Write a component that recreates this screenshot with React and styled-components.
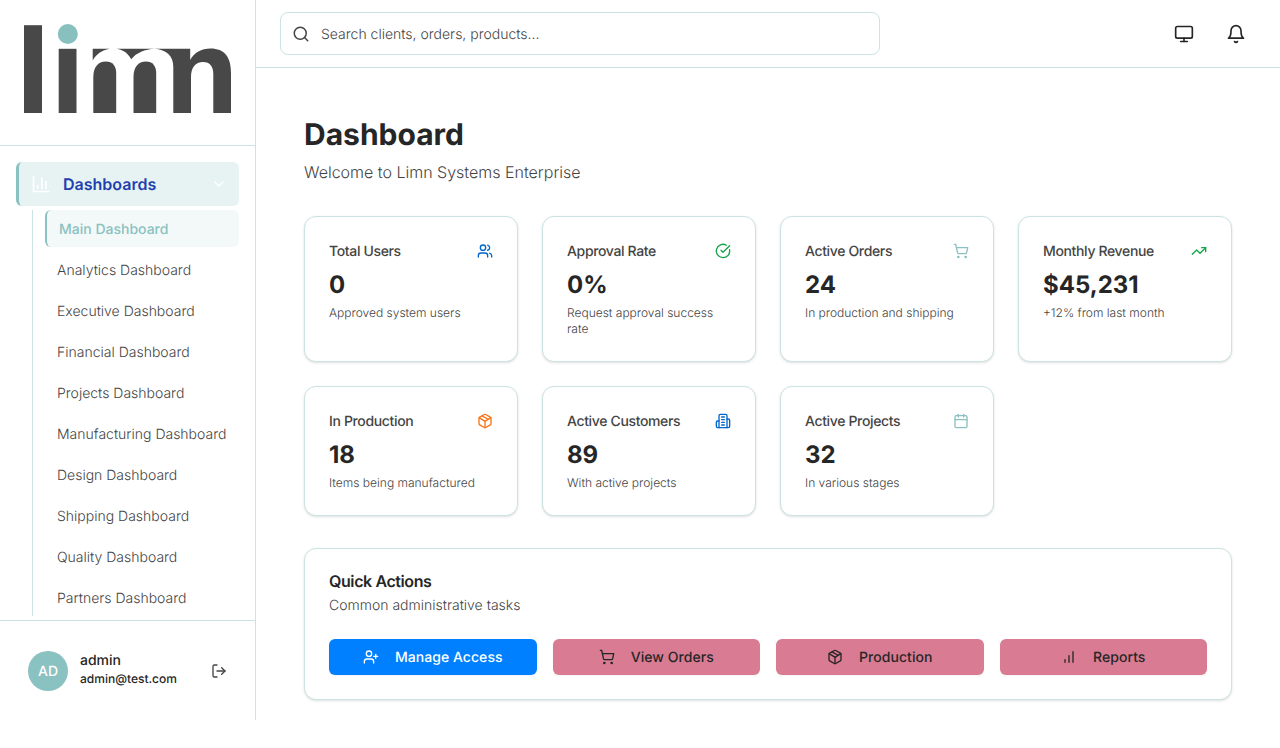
import React from "react";
import styled, { createGlobalStyle, css } from "styled-components";

const line = "#cbe3e2";
const teal = "#8ac1c1";
const ink = "#262626";
const soft = "#444444";

const GlobalStyle = createGlobalStyle`
  *, *::before, *::after { box-sizing: border-box; }
  body {
    margin: 0;
    background: #fff;
    color: ${ink};
    font-family: Inter, "Liberation Sans", sans-serif;
    font-size: 16px;
    line-height: 24px;
    font-weight: 300;
    -webkit-font-smoothing: antialiased;
    text-rendering: geometricPrecision;
  }
  h1, h2, p, ul { margin: 0; padding: 0; }
  button { font: inherit; border: 0; background: none; padding: 0; text-rendering: inherit; }
`;

const icons = {
  chart: <><path d="M3 3v18h18" /><path d="M18 17V9" /><path d="M13 17V5" /><path d="M8 17v-3" /></>,
  chevron: <path d="m6 9 6 6 6-6" />,
  logout: <><path d="M9 21H5a2 2 0 0 1-2-2V5a2 2 0 0 1 2-2h4" /><path d="m16 17 5-5-5-5" /><path d="M21 12H9" /></>,
  search: <><circle cx="11" cy="11" r="8" /><path d="m21 21-4.3-4.3" /></>,
  monitor: <><rect x="2" y="3" width="20" height="14" rx="2" /><path d="M8 21h8" /><path d="M12 17v4" /></>,
  bell: <><path d="M6 8a6 6 0 0 1 12 0c0 7 3 9 3 9H3s3-2 3-9" /><path d="M10.3 21a1.94 1.94 0 0 0 3.4 0" /></>,
  users: <><path d="M16 21v-2a4 4 0 0 0-4-4H6a4 4 0 0 0-4 4v2" /><circle cx="9" cy="7" r="4" /><path d="M22 21v-2a4 4 0 0 0-3-3.87" /><path d="M16 3.13a4 4 0 0 1 0 7.75" /></>,
  check: <><path d="M21.801 10A10 10 0 1 1 17 3.335" /><path d="m9 11 3 3L22 4" /></>,
  cart: <><circle cx="8" cy="21" r="1" /><circle cx="19" cy="21" r="1" /><path d="M2.05 2.05h2l2.66 12.42a2 2 0 0 0 2 1.58h9.78a2 2 0 0 0 1.95-1.57l1.65-7.43H5.12" /></>,
  trend: <><path d="M22 7l-8.5 8.5-5-5L2 17" /><path d="M16 7h6v6" /></>,
  box: <><path d="M11 21.73a2 2 0 0 0 2 0l7-4A2 2 0 0 0 21 16V8a2 2 0 0 0-1-1.73l-7-4a2 2 0 0 0-2 0l-7 4A2 2 0 0 0 3 8v8a2 2 0 0 0 1 1.73z" /><path d="M12 22V12" /><path d="m3.3 7 7.703 4.734a2 2 0 0 0 1.994 0L20.7 7" /><path d="m7.5 4.27 9 5.15" /></>,
  building: <><path d="M6 22V4a2 2 0 0 1 2-2h8a2 2 0 0 1 2 2v18Z" /><path d="M6 12H4a2 2 0 0 0-2 2v6a2 2 0 0 0 2 2h2" /><path d="M18 9h2a2 2 0 0 1 2 2v9a2 2 0 0 1-2 2h-2" /><path d="M10 6h4" /><path d="M10 10h4" /><path d="M10 14h4" /><path d="M10 18h4" /></>,
  calendar: <><path d="M8 2v4" /><path d="M16 2v4" /><rect x="3" y="4" width="18" height="18" rx="2" /><path d="M3 10h18" /></>,
  userPlus: <><path d="M16 21v-2a4 4 0 0 0-4-4H6a4 4 0 0 0-4 4v2" /><circle cx="9" cy="7" r="4" /><path d="M19 8v6" /><path d="M22 11h-6" /></>,
  bars: <><path d="M12 20V10" /><path d="M18 20V4" /><path d="M6 20v-4" /></>,
};

const IconSvg = styled.svg`
  display: block;
  flex: none;
  width: ${(p) => p.$size}px;
  height: ${(p) => p.$size}px;
  fill: none;
  stroke: ${(p) => p.$color || "currentColor"};
  stroke-width: 2;
  stroke-linecap: round;
  stroke-linejoin: round;
`;

const Icon = ({ name, size = 16, color }) => (
  <IconSvg viewBox="0 0 24 24" $size={size} $color={color} aria-hidden="true">
    {icons[name]}
  </IconSvg>
);

const Label = styled.span`
  padding-top: 2px;
  line-height: 18px;
`;

const Shell = styled.div`
  display: flex;
  height: 720px;
  overflow: hidden;
`;

const Sidebar = styled.aside`
  display: flex;
  flex-direction: column;
  width: 256px;
  flex: none;
  border-right: 1px solid ${line};
`;

const Brand = styled.div`
  height: 146px;
  flex: none;
  padding: 24px;
  border-bottom: 1px solid ${line};
`;

const Logo = styled.svg`
  display: block;
  width: 207px;
  height: 89px;
`;

const Nav = styled.nav`
  flex: 1;
  min-height: 0;
  overflow: hidden;
  padding: 16px;
`;

const NavGroup = styled.button`
  display: flex;
  align-items: center;
  width: 100%;
  height: 44px;
  padding: 0 12px;
  border-left: 3px solid ${teal};
  border-radius: 6px;
  background: #e7f3f3;
  color: #fff;
`;

const NavGroupLabel = styled.span`
  flex: 1;
  margin-left: 12px;
  text-align: left;
  color: #1e40af;
  font-weight: 600;
`;

const SubList = styled.ul`
  display: flex;
  flex-direction: column;
  gap: 4px;
  margin: 4px 0 0 16px;
  padding-left: 12px;
  border-left: 1px solid ${line};
  list-style: none;
`;

const SubItem = styled.li`
  height: 37px;
  padding: 0 12px;
  border-radius: 6px;
  font-size: 14px;
  line-height: 39px;
  white-space: nowrap;
  color: ${soft};
  ${(p) =>
    p.$active &&
    css`
      border-left: 2px solid ${teal};
      background: #f3f9f9;
      color: ${teal};
      font-weight: 500;
    `}
`;

const Account = styled.div`
  display: flex;
  align-items: center;
  height: 100px;
  flex: none;
  padding: 0 28px;
  border-top: 1px solid ${line};
`;

const Avatar = styled.div`
  width: 40px;
  height: 40px;
  border-radius: 50%;
  background: ${teal};
  color: #fff;
  font-size: 14px;
  font-weight: 500;
  line-height: 42px;
  text-align: center;
`;

const AccountText = styled.div`
  flex: 1;
  margin-left: 12px;
  padding-bottom: 4px;
  font-weight: 500;
`;

const AccountName = styled.p`
  font-size: 14px;
  line-height: 20px;
`;

const AccountMail = styled.p`
  font-size: 12px;
  line-height: 16px;
`;

const Page = styled.div`
  display: flex;
  flex-direction: column;
  flex: 1;
  min-width: 0;
`;

const TopBar = styled.header`
  display: flex;
  align-items: center;
  justify-content: space-between;
  height: 68px;
  flex: none;
  padding: 0 34px 0 24px;
  border-bottom: 1px solid ${line};
`;

const SearchBox = styled.div`
  display: flex;
  align-items: center;
  gap: 11px;
  width: 600px;
  height: 43px;
  padding: 0 11px;
  border: 1px solid ${line};
  border-radius: 8px;
  color: ${soft};
  font-size: 14px;
`;

const TopActions = styled.div`
  display: flex;
  gap: 32px;
`;

const Content = styled.main`
  padding: 48px;
`;

const Title = styled.h1`
  padding-top: 1px;
  font-size: 30px;
  line-height: 36px;
  font-weight: 700;
`;

const Subtitle = styled.p`
  margin-top: 7px;
  color: ${soft};
`;

const panel = css`
  border: 1px solid ${line};
  border-radius: 12px;
  background: #fff;
  box-shadow: 0 1px 3px rgba(0, 0, 0, 0.1), 0 1px 2px -1px rgba(0, 0, 0, 0.1);
  padding: 24px;
`;

const StatGrid = styled.section`
  display: grid;
  grid-template-columns: repeat(4, 1fr);
  gap: 24px;
  margin-top: 32px;
`;

const StatCard = styled.article`
  ${panel}
`;

const StatHead = styled.div`
  display: flex;
  align-items: center;
  justify-content: space-between;
  height: 20px;
  font-size: 14px;
  font-weight: 500;
  letter-spacing: -0.35px;
  color: ${soft};
`;

const StatValue = styled.p`
  margin-top: 8px;
  font-size: 24px;
  line-height: 32px;
  font-weight: 700;
`;

const StatNote = styled.p`
  margin-top: 4px;
  font-size: 12px;
  line-height: 16px;
  color: ${soft};
`;

const QuickPanel = styled.section`
  ${panel}
  margin-top: 32px;
`;

const QuickTitle = styled.h2`
  font-size: 16px;
  line-height: 16px;
  font-weight: 600;
  letter-spacing: -0.4px;
`;

const QuickNote = styled.p`
  margin-top: 7px;
  font-size: 14px;
  line-height: 20px;
  color: ${soft};
`;

const ActionRow = styled.div`
  display: grid;
  grid-template-columns: repeat(4, 1fr);
  gap: 16px;
  margin-top: 23px;
`;

const ActionButton = styled.button`
  display: flex;
  align-items: center;
  justify-content: center;
  gap: 16px;
  height: 36px;
  border-radius: 6px;
  font-size: 14px;
  font-weight: 500;
  letter-spacing: 0.05px;
  background: ${(p) => (p.$primary ? "#0080ff" : "#d97b93")};
  color: ${(p) => (p.$primary ? "#fff" : ink)};
  box-shadow: 0 1px 2px rgba(0, 0, 0, 0.05);
`;

const dashboards = ["Main", "Analytics", "Executive", "Financial", "Projects", "Manufacturing", "Design", "Shipping", "Quality", "Partners"];

const stats = [
  { label: "Total Users", value: "0", note: "Approved system users", icon: "users", color: "#0066cc" },
  { label: "Approval Rate", value: "0%", note: "Request approval success rate", icon: "check", color: "#16a34a" },
  { label: "Active Orders", value: "24", note: "In production and shipping", icon: "cart", color: teal },
  { label: "Monthly Revenue", value: "$45,231", note: "+12% from last month", icon: "trend", color: "#16a34a" },
  { label: "In Production", value: "18", note: "Items being manufactured", icon: "box", color: "#f97316" },
  { label: "Active Customers", value: "89", note: "With active projects", icon: "building", color: "#0066cc" },
  { label: "Active Projects", value: "32", note: "In various stages", icon: "calendar", color: teal },
];

const actions = [
  { label: "Manage Access", icon: "userPlus", primary: true },
  { label: "View Orders", icon: "cart" },
  { label: "Production", icon: "box" },
  { label: "Reports", icon: "bars" },
];

const LimnLogo = () => (
  <Logo viewBox="24 24 207 89" role="img" aria-label="limn">
    <g fill="#484848">
      <rect x="24" y="25.2" width="18" height="87.8" />
      <rect x="58.7" y="48.8" width="17.8" height="64.2" />
      <path d="M92.7 48.8H109.5C102 50.3 96 54.3 92.7 60.5Z" />
      <path d="M116.5 48.8H155C144.5 49.4 136.7 52.6 131.2 59.3C127.8 53.2 123.4 49.8 116.5 48.8Z" />
      <path d="M93.3 113V77C93.3 67.5 98 61.6 105.8 61.6C112.8 61.6 116.2 66.2 116.2 73.5V113Z" />
      <path d="M133.5 113V77C133.5 67.5 138 61.6 146 61.6C152.8 61.6 156.2 66.2 156.2 73.5V113Z" />
      <path d="M154.5 48.8H190.2V60C194.5 52.5 201 48.6 210.5 48.6C224.5 48.6 231 57 231 73V113H213.3V74C213.3 66.5 210 62 203 62C195.5 62 191 67.5 191 77V113H173.3V67C173.3 55.5 166.5 49.8 154.5 48.8Z" />
    </g>
    <circle cx="67.8" cy="34" r="10" fill="#88c0c0" />
  </Logo>
);

export default function App() {
  return (
    <>
      <GlobalStyle />
      <Shell>
        <Sidebar>
          <Brand><LimnLogo /></Brand>
          <Nav>
            <NavGroup>
              <Icon name="chart" size={20} />
              <NavGroupLabel>Dashboards</NavGroupLabel>
              <Icon name="chevron" />
            </NavGroup>
            <SubList>
              {dashboards.map((name, i) => (
                <SubItem key={name} $active={i === 0}>{`${name} Dashboard`}</SubItem>
              ))}
            </SubList>
          </Nav>
          <Account>
            <Avatar>AD</Avatar>
            <AccountText>
              <AccountName>admin</AccountName>
              <AccountMail>admin@test.com</AccountMail>
            </AccountText>
            <Icon name="logout" color={soft} />
          </Account>
        </Sidebar>
        <Page>
          <TopBar>
            <SearchBox>
              <Icon name="search" size={18} />
              <Label>Search clients, orders, products...</Label>
            </SearchBox>
            <TopActions>
              <Icon name="monitor" size={20} />
              <Icon name="bell" size={20} />
            </TopActions>
          </TopBar>
          <Content>
            <Title>Dashboard</Title>
            <Subtitle>Welcome to Limn Systems Enterprise</Subtitle>
            <StatGrid>
              {stats.map((s) => (
                <StatCard key={s.label}>
                  <StatHead>
                    <Label>{s.label}</Label>
                    <Icon name={s.icon} color={s.color} />
                  </StatHead>
                  <StatValue>{s.value}</StatValue>
                  <StatNote>{s.note}</StatNote>
                </StatCard>
              ))}
            </StatGrid>
            <QuickPanel>
              <QuickTitle>Quick Actions</QuickTitle>
              <QuickNote>Common administrative tasks</QuickNote>
              <ActionRow>
                {actions.map((a) => (
                  <ActionButton key={a.label} $primary={a.primary}>
                    <Icon name={a.icon} />
                    <Label>{a.label}</Label>
                  </ActionButton>
                ))}
              </ActionRow>
            </QuickPanel>
          </Content>
        </Page>
      </Shell>
    </>
  );
}
